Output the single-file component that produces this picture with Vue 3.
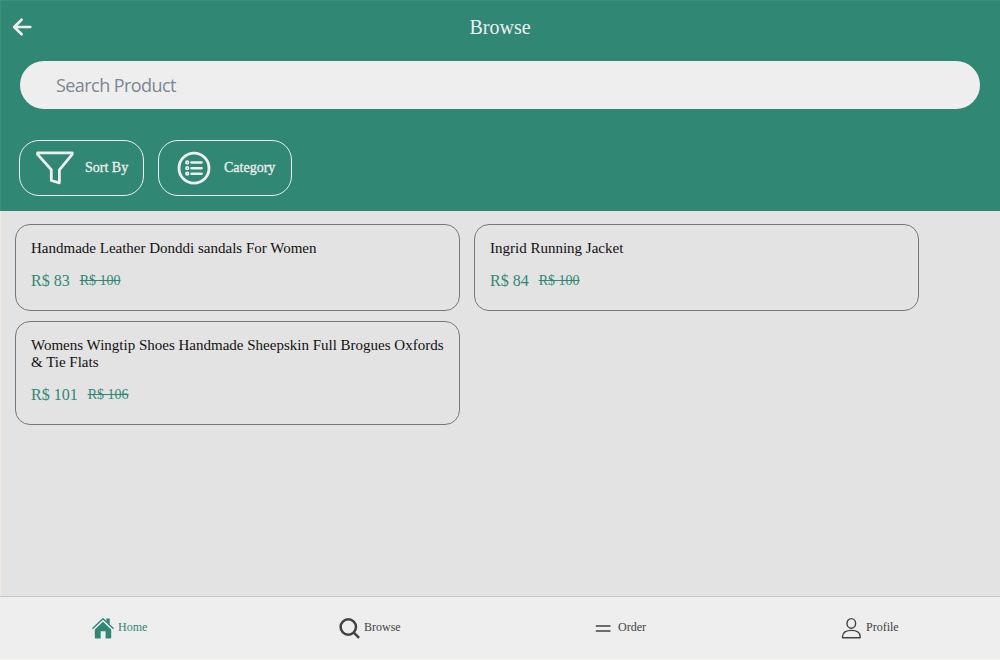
<script setup>
const products = [
  { name: 'Handmade Leather Donddi sandals For Women', price: 83, old: 100 },
  { name: 'Ingrid Running Jacket', price: 84, old: 100 },
  { name: 'Womens Wingtip Shoes Handmade Sheepskin Full Brogues Oxfords & Tie Flats', price: 101, old: 106 },
]
</script>

<template>
  <div class="page">
    <header class="header">
      <div class="bar">
        <svg class="back" width="20" height="18" viewBox="0 0 20 18"><path d="M9.6 1.8 2.2 9l7.4 7.2M2.5 9h15.8" /></svg>
        <h1>Browse</h1>
      </div>
      <input class="search" type="text" placeholder="Search Product" />
      <div class="filters">
        <button class="filter sort">
          <svg width="40" height="36" viewBox="0 0 40 36"><path d="M2.6 2.8H37.2V4.4L24.4 19.8V32.8L16.3 30.5V19.8L2.6 4.4Z" /></svg>
          <span>Sort By</span>
        </button>
        <button class="filter category">
          <svg width="36" height="36" viewBox="0 0 36 36">
            <circle cx="18" cy="18.2" r="15" />
            <g class="lines"><path d="M15.4 12.5h10.2M15.4 18.2h10.2M15.4 23.7h10.2" /></g>
            <g class="dots"><circle cx="11.2" cy="12.5" r="1.3" /><circle cx="11.2" cy="18.2" r="1.3" /><circle cx="11.2" cy="23.7" r="1.3" /></g>
          </svg>
          <span>Category</span>
        </button>
      </div>
    </header>

    <main class="products">
      <article v-for="p in products" :key="p.name" class="card">
        <h2>{{ p.name }}</h2>
        <div class="prices"><span class="price">R$ {{ p.price }}</span><del>R$ {{ p.old }}</del></div>
      </article>
    </main>

    <nav class="nav">
      <a class="home active">
        <svg width="22" height="22" viewBox="0 0 22 22">
          <path class="fill" d="M11 4.7 19.2 12.4V20.6a1 1 0 0 1-1 1h-4.6v-7.4H8.7v7.4H3.8a1 1 0 0 1-1-1v-8.2ZM14.3 1.4h3.4v6l-3.4-3.3Z" />
          <path class="roof" d="M.9 11.2 11 1.8 21.1 11.2" />
        </svg>
        <span>Home</span>
      </a>
      <a class="browse">
        <svg width="22" height="22" viewBox="0 0 22 22"><circle cx="9.3" cy="10" r="7.7" /><path d="m14.8 15.7 5.3 5.2" /></svg>
        <span>Browse</span>
      </a>
      <a class="order">
        <svg width="16" height="22" viewBox="0 0 16 22"><path d="M.8 8.9h14.7M.8 13.9h14.7" /></svg>
        <span>Order</span>
      </a>
      <a class="profile">
        <svg width="20" height="22" viewBox="0 0 20 22"><ellipse cx="10.3" cy="6.4" rx="4.3" ry="4.8" /><path d="M1.5 20.8v-1.2c0-4.2 3.7-6.2 8.8-6.2s8.8 2 8.8 6.2v1.2Z" /></svg>
        <span>Profile</span>
      </a>
    </nav>
  </div>
</template>

<style>
body { margin: 0; background: #f8f8f2; }
</style>

<style scoped>
.page {
  box-sizing: border-box;
  width: 1000px;
  height: 659px;
  overflow: hidden;
  display: flex;
  flex-direction: column;
  background: #e3e3e3;
  font-family: "Liberation Serif", "Times New Roman", serif;
}
.header {
  box-sizing: border-box;
  height: 211px;
  flex: none;
  background: #308874;
  border-top: 1px solid #3d9275;
  border-left: 1px solid #3d9275;
}
.bar { height: 60px; display: grid; grid-template-columns: 40px 1fr 41px; }
.back { margin: 16.5px 0 0 11px; overflow: visible; fill: none; stroke: #eee; stroke-width: 2.7; stroke-linecap: round; stroke-linejoin: round; }
h1 { margin: 15px 0 0; text-align: center; color: #eee; font-size: 20px; line-height: 23px; font-weight: 400; }
.search {
  display: block;
  box-sizing: border-box;
  width: 960px;
  height: 48px;
  margin: 0 0 0 19px;
  padding: 0 36px;
  border: 0;
  border-radius: 24px;
  background: #eee;
  font: 18px/26px "Open Sans", "Noto Sans", sans-serif;
  letter-spacing: -.56px;
}
.search::placeholder { color: #7b8793; opacity: 1; }
.filters { display: flex; gap: 14px; margin: 31px 0 0 18px; }
.filter {
  box-sizing: border-box;
  height: 56px;
  padding: 0;
  display: flex;
  align-items: center;
  border: 1px solid #eee;
  border-radius: 20px;
  background: none;
  color: #eee;
  font: 14px/16px "Liberation Serif", serif;
  -webkit-text-stroke: .3px #eee;
}
.filter svg { flex: none; fill: none; stroke: #eee; stroke-width: 2.8; stroke-linejoin: round; }
.sort { width: 125px; padding-left: 15px; }
.sort span { margin-left: 10px; }
.category { width: 134px; padding-left: 17px; }
.category span { margin-left: 12px; }
.filter .lines { stroke-width: 2.5; stroke-linecap: round; }
.filter .dots { stroke-width: 1.7; }
.products {
  flex: 1;
  display: grid;
  grid-template-columns: 445px 445px;
  gap: 10px 14px;
  align-content: start;
  padding: 13px 0 0 14px;
  border-left: 1px solid #f0eadd;
}
.card { box-sizing: border-box; padding: 15px 14px 20px 15px; border: 1px solid #777; border-radius: 15px; }
h2 { margin: 0; color: #111; font-size: 15px; line-height: 17px; font-weight: 400; }
.prices { display: flex; gap: 10px; margin-top: 14px; height: 19px; align-items: center; color: #308874; }
.price { font-size: 16px; line-height: 19px; }
del { font-size: 14px; line-height: 17px; }
.nav {
  box-sizing: border-box;
  height: 63px;
  flex: none;
  display: grid;
  grid-template-columns: repeat(4, 250px);
  border-top: 1px solid #c6c6c6;
  background: #eee;
  color: #424242;
  font-size: 12px;
  line-height: 14px;
}
.nav a { display: flex; align-items: flex-start; padding-top: 20px; }
.nav svg { flex: none; fill: none; stroke: #424242; stroke-width: 2.5; }
.nav span { margin: 3px 0 0 4px; }
.nav .active { color: #308874; }
.nav .home { padding-left: 92px; }
.nav .browse { padding-left: 89px; }
.nav .browse span { margin-left: 3px; }
.nav .order { padding-left: 95px; }
.nav .profile { padding-left: 91px; }
.nav .order span { margin-left: 7px; }
.nav .profile span { margin-left: 5px; }
.nav .order svg { stroke-width: 1.5; }
.nav .profile svg { stroke-width: 1.4; stroke-linejoin: round; }
.nav .fill { fill: #308874; stroke: none; }
.nav .roof { stroke: #308874; stroke-width: 1.4; stroke-linecap: round; }
</style>
